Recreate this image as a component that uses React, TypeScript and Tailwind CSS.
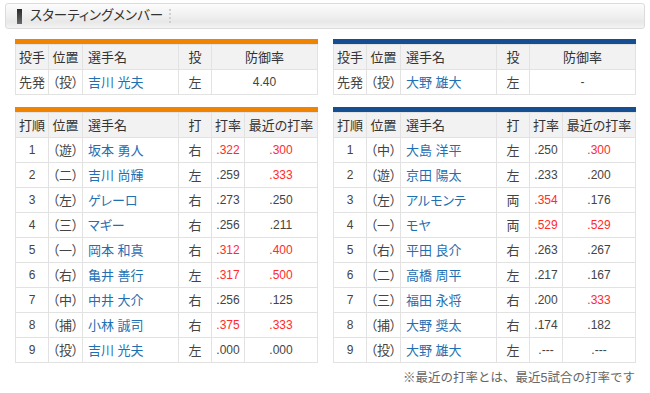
import React from 'react';

type Batter = { no: number; pos: string; name: string; hand: string; avg: string; recent: string; avgRed?: boolean; recentRed?: boolean };

const giants: Batter[] = [
  { no: 1, pos: '（遊）', name: '坂本 勇人', hand: '右', avg: '.322', recent: '.300', avgRed: true, recentRed: true },
  { no: 2, pos: '（二）', name: '吉川 尚輝', hand: '左', avg: '.259', recent: '.333', recentRed: true },
  { no: 3, pos: '（左）', name: 'ゲレーロ', hand: '右', avg: '.273', recent: '.250' },
  { no: 4, pos: '（三）', name: 'マギー', hand: '右', avg: '.256', recent: '.211' },
  { no: 5, pos: '（一）', name: '岡本 和真', hand: '右', avg: '.312', recent: '.400', avgRed: true, recentRed: true },
  { no: 6, pos: '（右）', name: '亀井 善行', hand: '左', avg: '.317', recent: '.500', avgRed: true, recentRed: true },
  { no: 7, pos: '（中）', name: '中井 大介', hand: '右', avg: '.256', recent: '.125' },
  { no: 8, pos: '（捕）', name: '小林 誠司', hand: '右', avg: '.375', recent: '.333', avgRed: true, recentRed: true },
  { no: 9, pos: '（投）', name: '吉川 光夫', hand: '左', avg: '.000', recent: '.000' },
];

const dragons: Batter[] = [
  { no: 1, pos: '（中）', name: '大島 洋平', hand: '左', avg: '.250', recent: '.300', recentRed: true },
  { no: 2, pos: '（遊）', name: '京田 陽太', hand: '左', avg: '.233', recent: '.200' },
  { no: 3, pos: '（左）', name: 'アルモンテ', hand: '両', avg: '.354', recent: '.176', avgRed: true },
  { no: 4, pos: '（一）', name: 'モヤ', hand: '両', avg: '.529', recent: '.529', avgRed: true, recentRed: true },
  { no: 5, pos: '（右）', name: '平田 良介', hand: '右', avg: '.263', recent: '.267' },
  { no: 6, pos: '（二）', name: '高橋 周平', hand: '左', avg: '.217', recent: '.167' },
  { no: 7, pos: '（三）', name: '福田 永将', hand: '右', avg: '.200', recent: '.333', recentRed: true },
  { no: 8, pos: '（捕）', name: '大野 奨太', hand: '右', avg: '.174', recent: '.182' },
  { no: 9, pos: '（投）', name: '大野 雄大', hand: '左', avg: '.---', recent: '.---' },
];

const cell = 'border border-[#e2e2e2] h-[25px] p-0 text-center align-middle';
const head = `${cell} bg-[#f2f2f2] text-[#333]`;
const nameCell = 'border border-[#e2e2e2] h-[25px] p-0 pl-[5px] text-left align-middle text-[#1f6fb2]';

const PitcherTable = ({ bar, name, era }: { bar: string; name: string; era: string }) => (
  <div>
    <div className={`h-[5px] ${bar}`}></div>
    <table className="w-full table-fixed border-collapse text-[13px]">
      <colgroup>
        <col className="w-[33px]" />
        <col className="w-[34px]" />
        <col className="w-[96px]" />
        <col className="w-[33px]" />
        <col />
      </colgroup>
      <thead>
        <tr>
          <th className={`${head} font-normal`}>投手</th>
          <th className={`${head} font-normal`}>位置</th>
          <th className={`${head} font-normal !text-left pl-[5px]`}>選手名</th>
          <th className={`${head} font-normal`}>投</th>
          <th className={`${head} font-normal`}>防御率</th>
        </tr>
      </thead>
      <tbody className="text-[#444]">
        <tr>
          <td className={cell}>先発</td>
          <td className={cell}>（投）</td>
          <td className={nameCell}>{name}</td>
          <td className={cell}>左</td>
          <td className={`${cell} text-[12px]`}>{era}</td>
        </tr>
      </tbody>
    </table>
  </div>
);

const LineupTable = ({ bar, rows }: { bar: string; rows: Batter[] }) => (
  <div>
    <div className={`h-[5px] ${bar}`}></div>
    <table className="w-full table-fixed border-collapse text-[13px]">
      <colgroup>
        <col className="w-[33px]" />
        <col className="w-[34px]" />
        <col className="w-[96px]" />
        <col className="w-[33px]" />
        <col className="w-[33px]" />
        <col />
      </colgroup>
      <thead>
        <tr>
          <th className={`${head} font-normal`}>打順</th>
          <th className={`${head} font-normal`}>位置</th>
          <th className={`${head} font-normal !text-left pl-[5px]`}>選手名</th>
          <th className={`${head} font-normal`}>打</th>
          <th className={`${head} font-normal`}>打率</th>
          <th className={`${head} font-normal`}>最近の打率</th>
        </tr>
      </thead>
      <tbody className="text-[#444]">
        {rows.map((r) => (
          <tr key={r.no}>
            <td className={`${cell} text-[12px]`}>{r.no}</td>
            <td className={cell}>{r.pos}</td>
            <td className={nameCell}>{r.name}</td>
            <td className={cell}>{r.hand}</td>
            <td className={`${cell} text-[12px] ${r.avgRed ? 'text-[#ff2b2b]' : ''}`}>{r.avg}</td>
            <td className={`${cell} text-[12px] ${r.recentRed ? 'text-[#ff2b2b]' : ''}`}>{r.recent}</td>
          </tr>
        ))}
      </tbody>
    </table>
  </div>
);

export default function App() {
  return (
    <div className="w-[650px] h-[393px] bg-white pt-[3px] font-['Liberation_Sans','Noto_Sans_CJK_JP',sans-serif] [font-feature-settings:'palt'] leading-none">
      {/* section title */}
      <div className="mx-[5px] h-[26px] rounded-[3px] border border-[#dcdcdc] bg-[linear-gradient(#fcfcfc,#f1f1f1_45%,#e8e8e8_75%,#f3f3f3)] flex items-center pl-[11px]">
        <div className="w-[5px] h-[15px] bg-[linear-gradient(#2a2a2a,#6a6a6a)]"></div>
        <span className="ml-[8px] text-[13.5px] text-[#333]">スターティングメンバー</span>
        <div className="ml-[6px] h-[14px] border-l-2 border-dotted border-[#d0d0d0]"></div>
      </div>

      <div className="mt-[10px] px-[15px] grid grid-cols-[303px_303px] gap-x-[15px] gap-y-[12px]">
        <PitcherTable bar="bg-[#f08300]" name="吉川 光夫" era="4.40" />
        <PitcherTable bar="bg-[#164f91]" name="大野 雄大" era="-" />
        <LineupTable bar="bg-[#f08300]" rows={giants} />
        <LineupTable bar="bg-[#164f91]" rows={dragons} />
      </div>

      <p className="mt-[9px] pr-[15px] text-right text-[12.5px] text-[#666] [font-feature-settings:normal]">※最近の打率とは、最近5試合の打率です</p>
    </div>
  );
}
